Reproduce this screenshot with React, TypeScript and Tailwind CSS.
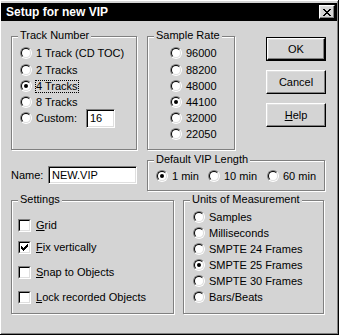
import React from "react";

const FACE = "bg-[#d4d4d4]";

const Radio = ({ checked }: { checked?: boolean }) => (
  <span className="inline-block h-[12px] w-[12px] shrink-0 rounded-full border border-b-white border-l-[#808080] border-r-white border-t-[#808080]">
    <span className="flex h-full w-full items-center justify-center rounded-full border border-b-[#dfdfdf] border-l-black border-r-[#dfdfdf] border-t-black bg-white">
      {checked && <span className="h-[4px] w-[4px] rounded-full bg-black" />}
    </span>
  </span>
);

const CHECK = [
  [6, 0], [5, 1], [6, 1], [0, 2], [4, 2], [5, 2], [6, 2],
  [0, 3], [1, 3], [3, 3], [4, 3], [5, 3],
  [0, 4], [1, 4], [2, 4], [3, 4], [4, 4],
  [1, 5], [2, 5], [3, 5], [2, 6],
];

const Check = ({ checked }: { checked?: boolean }) => (
  <span className="inline-block h-[13px] w-[13px] shrink-0 border border-b-white border-l-[#808080] border-r-white border-t-[#808080]">
    <span className="flex h-full w-full items-center justify-center border border-b-[#dfdfdf] border-l-black border-r-[#dfdfdf] border-t-black bg-white">
      {checked && (
        <svg width="7" height="7" viewBox="0 0 7 7" shapeRendering="crispEdges">
          {CHECK.map(([x, y]) => (
            <rect key={`${x}-${y}`} x={x} y={y} width="1" height="1" fill="#000" />
          ))}
        </svg>
      )}
    </span>
  </span>
);

const CLOSE = [
  [0, 0], [1, 0], [6, 0], [7, 0],
  [1, 1], [2, 1], [5, 1], [6, 1],
  [2, 2], [3, 2], [4, 2], [5, 2],
  [3, 3], [4, 3],
  [2, 4], [3, 4], [4, 4], [5, 4],
  [1, 5], [2, 5], [5, 5], [6, 5],
  [0, 6], [1, 6], [6, 6], [7, 6],
];

const Group = ({
  title,
  className,
  children,
}: {
  title: string;
  className: string;
  children: React.ReactNode;
}) => (
  <div
    className={`relative shrink-0 border border-[#808080] shadow-[inset_1px_1px_0_#fff,1px_1px_0_#fff] ${className}`}
  >
    <span className={`absolute left-[6px] top-[-8px] px-[2px] leading-[13px] ${FACE}`}>
      {title}
    </span>
    {children}
  </div>
);

const Option = ({
  checked,
  children,
  className = "",
}: {
  checked?: boolean;
  children: React.ReactNode;
  className?: string;
}) => (
  <div className={`flex h-[16px] items-center ${className}`}>
    <Radio checked={checked} />
    <span className="ml-[4px] whitespace-nowrap">{children}</span>
  </div>
);

const Box = ({
  checked,
  children,
  className = "",
}: {
  checked?: boolean;
  children: React.ReactNode;
  className?: string;
}) => (
  <div className={`flex h-[16px] items-center ${className}`}>
    <Check checked={checked} />
    <span className="ml-[5px] whitespace-nowrap">{children}</span>
  </div>
);

const Button = ({ isDefault, children }: { isDefault?: boolean; children: React.ReactNode }) => (
  <div className={`h-[24px] w-[60px] ${isDefault ? "border border-black" : ""}`}>
    <div className="flex h-full w-full items-center justify-center border border-b-black border-l-white border-r-black border-t-white shadow-[inset_-1px_-1px_0_#808080,inset_1px_1px_0_#dfdfdf]">
      {children}
    </div>
  </div>
);

const sunken =
  "border border-b-white border-l-[#808080] border-r-white border-t-[#808080] bg-white shadow-[inset_1px_1px_0_#000,inset_-1px_-1px_0_#dfdfdf]";

export default function App() {
  return (
    <div
      className={`flex h-[335px] w-[339px] flex-col border-b border-r border-b-black border-r-black pl-[1px] pt-[3px] font-['Liberation_Sans',Arial,sans-serif] text-[11px] leading-[13px] text-black shadow-[inset_1px_1px_0_#fff,inset_-1px_-1px_0_#808080] ${FACE}`}
    >
      {/* title bar */}
      <div className="mr-[1px] flex h-[18px] items-center justify-between bg-black pl-[5px] pr-[2px]">
        <span className="text-[12px] font-bold leading-[14px] text-white">Setup for new VIP</span>
        <div
          className={`flex h-[14px] w-[16px] items-center justify-center border border-b-black border-l-white border-r-black border-t-white shadow-[inset_-1px_-1px_0_#808080,inset_1px_1px_0_#dfdfdf] ${FACE}`}
        >
          <svg width="8" height="7" viewBox="0 0 8 7" shapeRendering="crispEdges" className="-ml-px">
            {CLOSE.map(([x, y]) => (
              <rect key={`${x}-${y}`} x={x} y={y} width="1" height="1" fill="#000" />
            ))}
          </svg>
        </div>
      </div>

      <div className="flex flex-col pl-[10px]">
        {/* row 1 */}
        <div className="mt-[15px] flex items-start">
          <Group title="Track Number" className="h-[114px] w-[126px]">
            <div className="flex flex-col pl-[8px] pt-[8px]">
              <Option>1 Track (CD TOC)</Option>
              <Option className="mt-[1px]">2 Tracks</Option>
              <div className="flex h-[16px] items-center">
                <Radio checked />
                <span className="ml-[3px] border border-dotted border-black px-0 leading-[11px]">4 Tracks</span>
              </div>
              <Option>8 Tracks</Option>
              <div className="flex h-[16px] items-center">
                <Radio />
                <span className="ml-[4px] w-[50px]">Custom:</span>
                <div className={`mt-[1px] flex h-[19px] w-[29px] items-center pl-[3px] ${sunken}`}>16</div>
              </div>
            </div>
          </Group>

          <Group title="Sample Rate" className="ml-[10px] h-[114px] w-[88px]">
            <div className="flex flex-col pl-[22px] pt-[8px]">
              <Option>96000</Option>
              <Option className="mt-[1px]">88200</Option>
              <Option>48000</Option>
              <Option checked>44100</Option>
              <Option>32000</Option>
              <Option>22050</Option>
            </div>
          </Group>

          <div className="ml-[31px] mt-[1px] flex flex-col gap-[9px]">
            <Button isDefault>OK</Button>
            <Button>Cancel</Button>
            <Button>
              <span>
                <span className="underline underline-offset-[1px]">H</span>elp
              </span>
            </Button>
          </div>
        </div>

        {/* row 2 */}
        <div className="mt-[10px] flex items-start">
          <div className="mt-[6px] flex h-[18px] w-[126px] items-center">
            <span className="w-[37px]">Name:</span>
            <div className={`flex h-[18px] w-[89px] items-center pl-[3px] ${sunken}`}>NEW.VIP</div>
          </div>
          <Group title="Default VIP Length" className="ml-[10px] h-[31px] w-[178px]">
            <div className="flex pl-[8px] pt-[7px]">
              <Option checked className="w-[52px]">1 min</Option>
              <Option className="w-[59px]">10 min</Option>
              <Option>60 min</Option>
            </div>
          </Group>
        </div>

        {/* row 3 */}
        <div className="mt-[9px] flex items-start">
          <Group title="Settings" className="h-[114px] w-[163px]">
            <div className="flex flex-col pl-[6px] pt-[16px]">
              <Box>
                <span className="underline underline-offset-[1px]">G</span>rid
              </Box>
              <Box checked className="mt-[6px]">
                <span className="underline underline-offset-[1px]">F</span>ix vertically
              </Box>
              <Box className="mt-[9px]">
                <span className="underline underline-offset-[1px]">S</span>nap to Objects
              </Box>
              <Box className="mt-[9px]">
                <span className="underline underline-offset-[1px]">L</span>ock recorded Objects
              </Box>
            </div>
          </Group>

          <Group title="Units of Measurement" className="ml-[9px] h-[114px] w-[141px]">
            <div className="flex flex-col pl-[9px] pt-[8px]">
              <Option>Samples</Option>
              <Option>Milliseconds</Option>
              <Option>SMPTE 24 Frames</Option>
              <Option checked>SMPTE 25 Frames</Option>
              <Option>SMPTE 30 Frames</Option>
              <Option>Bars/Beats</Option>
            </div>
          </Group>
        </div>
      </div>
    </div>
  );
}
